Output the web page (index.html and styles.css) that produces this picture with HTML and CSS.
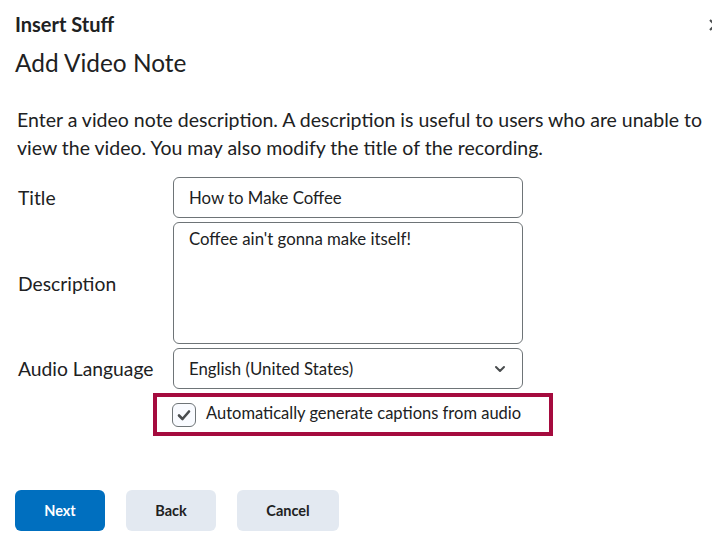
FILE: index.html
```html
<!DOCTYPE html>
<html>
<head>
<meta charset="utf-8">
<link rel="stylesheet" href="styles.css">
</head>
<body>
<div class="dialog">
  <div class="top">
    <h1 class="app-title">Insert Stuff</h1>
    <svg class="close" width="12" height="12" viewBox="0 0 12 12"><path d="M1 1 L11 11 M11 1 L1 11" stroke="#494c4e" stroke-width="2" fill="none"/></svg>
  </div>
  <h2 class="page-title">Add Video Note</h2>
  <p class="intro">Enter a video note description. A description is useful to users who are unable to view the video. You may also modify the title of the recording.</p>
  <div class="form">
    <label class="lbl">Title</label>
    <div class="field input">How to Make Coffee</div>
    <label class="lbl">Description</label>
    <div class="field textarea">Coffee ain't gonna make itself!</div>
    <label class="lbl">Audio Language</label>
    <div class="field select">
      <span>English (United States)</span>
      <svg width="12" height="8" viewBox="0 0 12 8"><path d="M2 2 L6 6 L10 2" stroke="#494c4e" stroke-width="2" fill="none" stroke-linecap="round" stroke-linejoin="round"/></svg>
    </div>
  </div>
  <div class="highlight">
    <span class="checkbox"><svg width="14" height="12" viewBox="0 0 14 12"><path d="M2 6.5 L5.5 10 L12 2.5" stroke="#494c4e" stroke-width="2.6" fill="none" stroke-linecap="round" stroke-linejoin="round"/></svg></span>
    <span class="cb-label">Automatically generate captions from audio</span>
  </div>
  <div class="buttons">
    <button class="btn primary">Next</button>
    <button class="btn">Back</button>
    <button class="btn cancel">Cancel</button>
  </div>
</div>
</body>
</html>
```
FILE: styles.css
```css
* { box-sizing: border-box; }
html, body { margin: 0; padding: 0; background: #fff; }
body { font-family: Lato, "Open Sans", sans-serif; color: #202122; }
.dialog { width: 712px; height: 553px; overflow: hidden; padding: 10px 0 0 15px; position: relative; }
.top { display: flex; justify-content: space-between; }
.app-title { margin: 0; font-size: 20px; font-weight: 700; line-height: 28px; color: #202122; }
.close { position: absolute; right: -9px; top: 19px; }
.page-title { margin: 10px 0 0 0; font-size: 24.4px; font-weight: 400; line-height: 30px; }
.intro { margin: 28px 0 0 2px; font-size: 19.5px; line-height: 28px; width: 700px; color: #202122; }
.form { display: grid; grid-template-columns: 155px 350px; row-gap: 4px; margin: 15px 0 0 3px; align-items: center; }
.lbl { font-size: 19.3px; color: #202122; }
.field { border: 1px solid #6e7477; border-radius: 6px; font-size: 16.8px; padding: 0 15px; color: #202122; }
.input { height: 41px; line-height: 39px; }
.textarea { height: 122px; padding-top: 5px; }
.select { height: 41px; display: flex; align-items: center; justify-content: space-between; padding-right: 16px; }
.highlight { margin: 4px 0 0 138px; width: 400px; height: 43px; border: 4px solid #a50b3e; display: flex; align-items: center; padding-left: 15px; }
.checkbox { width: 24px; height: 24px; border: 1px solid #6e7477; border-radius: 6px; background: #f9fbff; display: flex; align-items: center; justify-content: center; }
.cb-label { margin-left: 10px; font-size: 16.5px; margin-top: -3px; }
.buttons { display: flex; gap: 21px; margin-top: 54px; }
.btn { height: 41px; width: 90px; border: 0; border-radius: 6px; background: #e3e9f1; font-family: Lato, sans-serif; font-weight: 700; font-size: 14.5px; color: #202122; }
.btn.primary { background: #006fbf; color: #fff; }
.btn.cancel { width: 102px; }
```
